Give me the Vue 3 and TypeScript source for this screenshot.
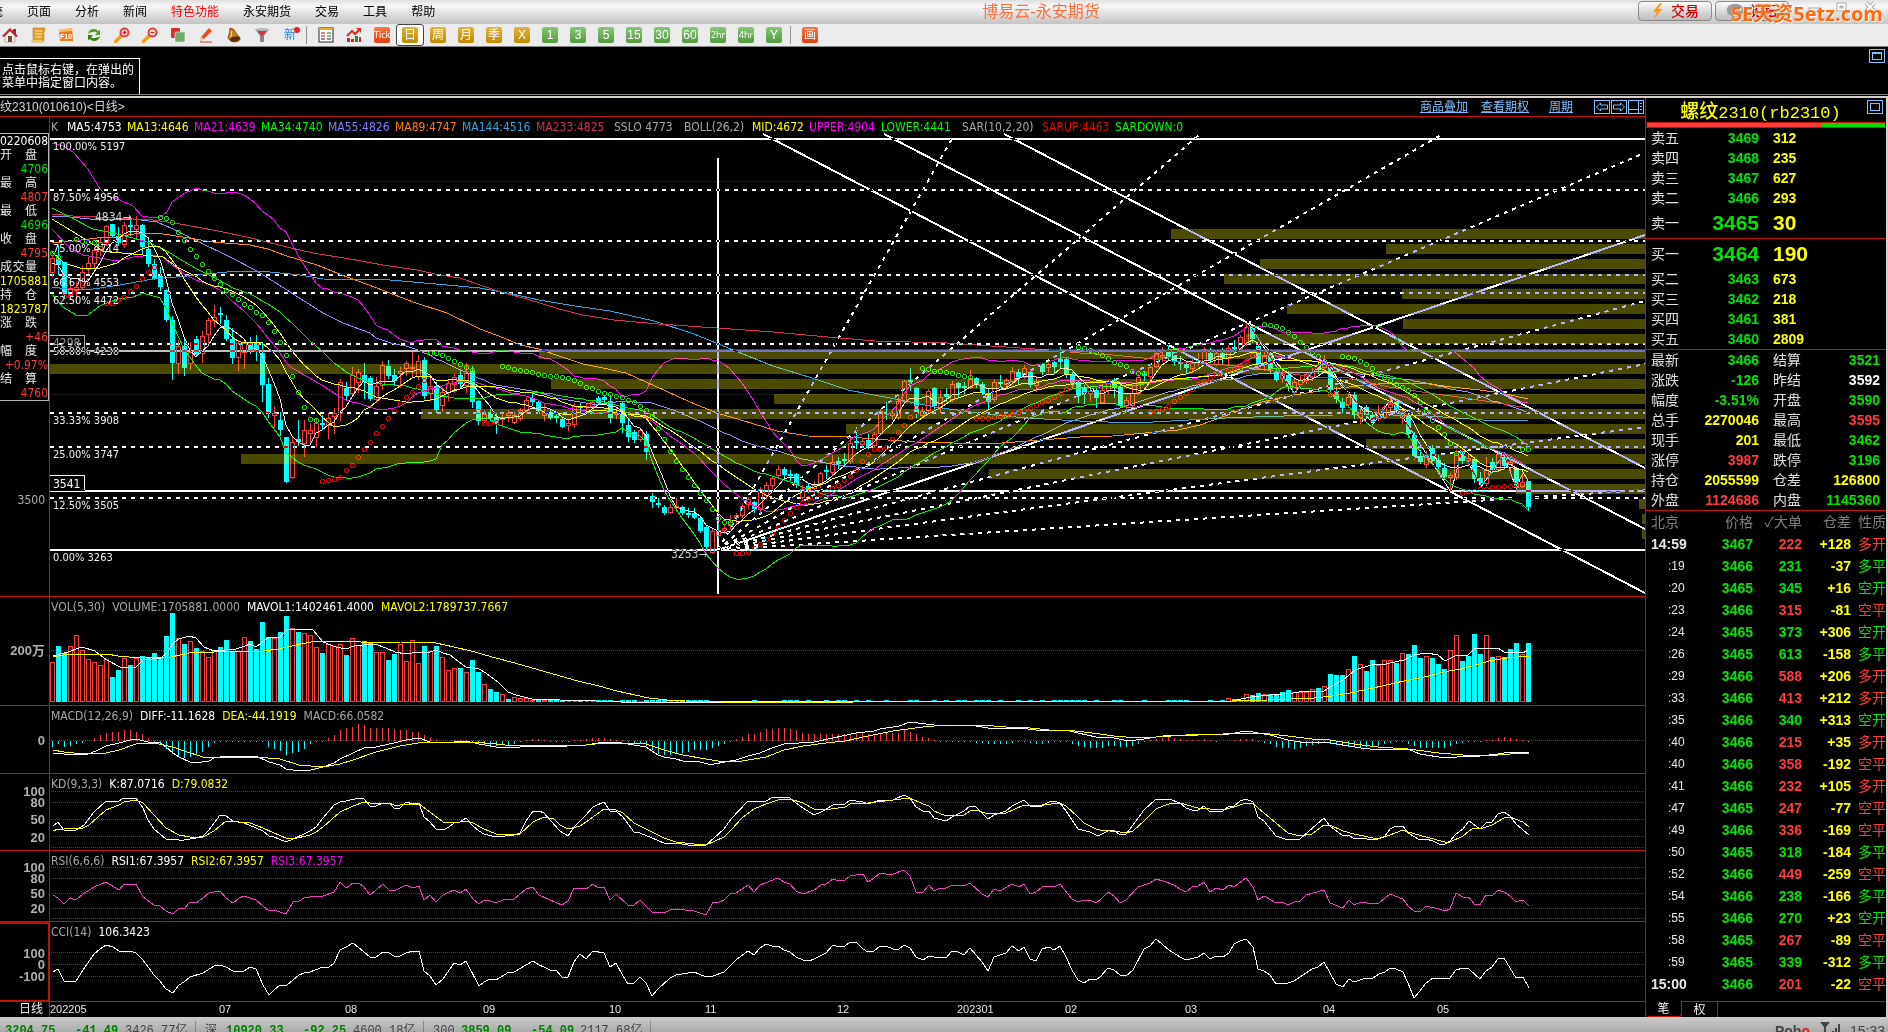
<script setup lang="ts">
interface Tile { x: number; y: number; sx: number; sy: number }
interface Candle { up: boolean; high: number; top: number; bottom: number; low: number }
interface Part { tile: Tile; text: string }

// Sampled series are kept in tiles: each has its own origin and scale.
const A: Tile = { x: 0, y: 130, sx: 3, sy: 3 }
const B: Tile = { x: 480, y: 230, sx: 2.529, sy: 3 }
const C: Tile = { x: 1080, y: 200, sx: 2.751, sy: 3 }
const D: Tile = { x: 0, y: 590, sx: 2.8, sy: 3 }
const E: Tile = { x: 560, y: 590, sx: 2.8, sy: 3 }
const F: Tile = { x: 1100, y: 590, sx: 2.8, sy: 3 }

const STEP = 6
const FIRST = 52
const barX = (i: number): number => FIRST + STEP * i
const tileY = (t: Tile, v: number): number => Math.round(t.y + v / t.sy)
const part = (tile: Tile, text: string): Part => ({ tile, text })

function trace(parts: Part[]): string {
  return parts
    .flatMap(({ tile, text }) =>
      text.trim().split(/\s+/).map((pair) => {
        const [x, y] = pair.split(',').map(Number)
        return `${Math.round(tile.x + x / tile.sx)},${tileY(tile, y)}`
      }),
    )
    .join(' ')
}

function readCandles(tile: Tile, text: string): Candle[] {
  return text.trim().split(/\s*;\s*/).filter(Boolean).map((row) => {
    const [high, top, bottom, low] = row.slice(1).split(' ').map(Number).map((v) => tileY(tile, v))
    return { up: row[0] === 'r', high, top, bottom, low }
  })
}

const candles: Candle[] = [
  ...readCandles(A, `r378 385 425 437;c345 388 405 432;c395 397 492 502;r445 475 495 505;r455 472 480 515;r408 427 470 475;r382 398 418 430;r350 360 398 410;r325 335 358 375;r285 289 337 345;c282 283 317 320;c292 317 338 345;r277 286 343 350;c262 285 290 315;r258 286 298 320;c283 285 352 372;c320 357 401 408;c388 402 446 448;c410 438 470 480;c478 480 570 572;c558 570 698 747;r630 648 698 730;c625 648 713 735;r635 665 698 718;c618 627 675 678;r603 618 670 695;r565 571 613 635;r525 562 570 588;c532 548 553 580;c555 570 627 630;c595 627 685 700;r630 639 680 720;r630 640 665 715;c620 637 662 668;c615 640 665 690;c635 668 765 812;c745 762 850 862;r828 850 856 890;c845 870 900 915;c920 922 1055 1055;r922 935 1042 1045;c870 927 937 945;r870 901 938 978;r880 901 908 935;r868 880 920 948;c855 879 884 893;r850 865 885 923;r835 848 858 908;r747 757 850 870;c755 773 798 807;r710 735 790 793;r717 727 755 785;c698 735 755 805;c738 744 806 810;r740 768 808 815;r693 706 765 778;c690 708 738 745;c718 735 752 762;r710 724 730 772;r693 698 713 735;r665 711 715 738;r675 694 737 747;c682 690 798 805;r738 767 790 810;c755 767 840 845;r770 787 826 843;r750 760 785 810;r733 740 762 785;c718 735 762 770;r700 730 765 785;c708 722 815 830;c810 812 872 882`),
  ...readCandles(B, `r540 552 570 575;c538 545 565 570;c548 562 578 608;r548 562 568 585;r540 550 555 572;r545 555 575 580;r533 541 563 570;r505 511 540 545;c490 505 515 525;c512 517 543 548;r520 545 555 570;c538 545 563 567;c548 558 565 575;c560 567 590 592;r568 580 585 600;r520 528 583 592;c515 527 532 545;r520 528 530 550;r512 517 528 533;c498 505 518 522;c495 500 510 520;c495 512 563 575;r530 545 552 565;c515 518 578 605;c570 585 620 632;c600 605 630 635;r597 600 628 632;c603 612 665 686;c790 798 815 832;c805 820 824 830;c825 830 848 852;r822 832 845 850;r805 828 830 842;c828 830 850 852;c835 848 853 862;c833 850 863 865;c862 865 902 905;c887 890 952 958;r898 902 965 968;r880 900 915 920;r885 895 900 910;r855 875 885 895;r848 855 860 880;r820 828 855 860;r800 808 822 835;c812 816 838 845;r770 778 838 850;r755 765 795 805;r738 745 765 775;r705 717 735 745;c710 717 735 750;c720 733 737 750;c728 732 765 770;r765 778 800 810;c760 768 773 785;r752 765 775 790;r725 730 760 770;c705 720 726 745;r675 695 725 735;c680 693 702 715;c668 686 690 705;r625 640 692 700;c590 632 638 655;r625 632 642 650;c612 630 650 655;r605 612 645 650;r538 543 608 612;c515 546 550 568;r538 550 556 568;r500 512 560 568;r450 454 512 520;c415 450 457 480;c470 475 552 560;r530 543 556 562;r478 484 540 545;c472 475 528 535;r480 500 530 545;c475 492 500 512;r453 462 508 512;c455 458 473 500;c455 468 472 488;r420 445 470 475;c442 444 465 470;c455 462 488 492;c475 490 515 537;r447 457 508 513;c435 455 462 475;r443 450 463 470;r412 422 452 460;c418 425 443 462;r405 413 440 445;c420 425 465 470;r438 452 465 482;c398 403 425 432;r395 402 412 425;c393 397 410 430;c350 387 395 415;c385 388 432 440;c425 433 465 470;c452 457 498 515`),
  ...readCandles(C, `c555 565 580 610;r560 573 578 600;c565 570 595 622;r553 570 605 610;r540 550 570 580;c535 540 563 590;c558 562 618 622;r590 600 615 632;r555 578 615 620;r522 532 578 583;c515 523 525 540;r492 502 527 535;r450 458 497 502;r442 466 472 482;c435 450 470 480;c442 450 483 495;c468 487 493 507;c490 492 505 518;r475 487 503 515;r458 480 488 495;r442 447 485 493;c443 458 480 485;r450 460 492 495;c445 460 473 490;r435 443 473 495;c420 441 446 455;r405 412 445 450;r370 382 430 435;c378 383 417 425;c430 438 492 502;r455 467 490 510;c452 458 508 515;c508 512 540 542;r510 522 535 545;c512 525 560 570;r530 545 575 580;r525 540 552 560;r515 522 540 548;r505 515 530 540;c480 495 510 520;r465 485 500 505;c487 495 570 578;c560 572 598 605;c595 605 625 635;r580 590 613 620;c575 585 645 655;r620 640 650 668;c615 622 645 655;c640 645 665 675;r615 640 655 660;r615 622 650 655;r595 612 622 640;c600 605 630 635;r625 635 650 668;c640 645 703 710;c695 705 767 778;c750 768 785 790;r752 772 793 802;c735 745 782 785;c765 780 800 805;c790 805 830 838;r820 824 832 870;r750 760 832 838;c745 752 783 790;r760 775 780 795;c770 778 838 845;c815 835 848 860;r770 810 850 855;c775 787 810 815;r755 762 808 812;c757 762 797 800;r770 785 800 810;c800 808 865 870;r820 845 858 862;c842 843 922 930`),
]

const closes = candles.map((c) => (c.up ? c.top : c.bottom))

function movingAverage(n: number, shift = 0): string {
  const out: string[] = []
  for (let i = n - 1; i < closes.length; i++) {
    const win = closes.slice(i - n + 1, i + 1)
    const mean = win.reduce((a, b) => a + b, 0) / n
    const dev = Math.sqrt(win.reduce((a, b) => a + (b - mean) ** 2, 0) / n)
    out.push(`${barX(i)},${Math.round(mean - shift * dev)}`)
  }
  return out.join(' ')
}

function withLead(lead: string, rest: string): string {
  return `${trace([part(A, lead)])} ${rest}`
}

const overlays = [
  { color: '#9090ff', points: withLead('157,259 210,262 300,270 400,268 470,275 520,297 590,333 690,380 770,422 870,485 970,550 1030,578 1110,608', movingAverage(55)) },
  { color: '#ff8c00', points: trace([
    part(A, '157,340 220,334 290,325 350,320 420,310 490,311 550,322 640,335 750,345 805,357 860,377 950,405 1040,440 1130,475 1240,515 1340,550 1440,597'),
    part(B, '60,325 100,345 150,358 200,378 260,402 310,413 370,430 420,455 470,483 530,517 600,548 660,570 750,602 830,618 930,622 1000,628 1100,635 1200,640 1320,640 1420,630'),
    part(C, '0,712 90,708 180,700 270,690 330,675 420,640 500,605 560,590 640,575 700,567 780,555 860,548 940,550 1020,560 1100,570 1160,578 1233,598')]) },
  { color: '#2fa4e0', points: trace([
    part(A, '157,470 200,477 280,478 360,465 460,447 560,437 680,425 780,424 900,435 970,448 1170,450 1240,455 1340,465 1440,475'),
    part(B, '80,193 150,210 240,228 330,243 440,272 540,312 640,360 740,408 840,445 930,480 1050,508 1150,530 1260,550 1380,565'),
    part(C, '0,663 150,670 300,660 400,653 560,647 700,645 850,645 960,647 1110,660 1233,661')]) },
  { color: '#d83058', points: trace([
    part(A, '157,253 220,257 290,262 400,267 460,270 540,282 640,300 740,320 860,350 940,368 1050,388 1150,405 1250,420 1320,435 1380,445 1440,466'),
    part(B, '60,188 120,207 200,237 260,256 340,270 450,282 600,295 740,305 880,322 1000,333 1180,340 1330,350 1440,360'),
    part(C, '0,458 90,465 200,478 300,490 400,495 480,505 550,515 640,530 740,535 850,560 960,580 1060,595 1150,610 1233,625')]) },
  { color: '#00f000', points: withLead('157,235 210,260 280,298 340,310 400,325 440,335 500,362 535,385 590,418 650,448 700,475 740,490', movingAverage(34)) },
  { color: '#ff00ff', points: withLead('157,298 210,355 250,375 350,392 400,380 460,376 490,382', movingAverage(21)) },
  { color: '#ffff00', points: withLead('157,268 200,295 250,325 310,363 330,367 400,372 460,378 490,382 530,410 590,440', movingAverage(26)) },
  { color: '#ff00ff', points: withLead('157,38 190,48 220,65 265,118 300,178 320,198 360,210 400,228 427,258 445,262 480,260 500,247 517,215 555,188 590,175', movingAverage(26, 2)) },
  { color: '#00f000', points: withLead('157,492 190,530 229,556 265,556 300,527 350,508 400,500 430,490 480,505 500,540 520,585 553,658 590,710', movingAverage(26, -2)) },
  { color: '#ffff00', points: withLead('157,365 193,398 240,413 300,413 350,398', movingAverage(13)) },
  { color: '#e8e8e8', points: withLead('157,400 175,405 193,435 211,443', movingAverage(5)) },
]

function candlePath(up: boolean): string {
  return candles
    .map((c, i) => {
      if (c.up !== up) return ''
      const x = barX(i) + 0.5
      const wicks = `M${x} ${c.high}V${c.top}M${x} ${c.bottom}V${c.low + 1}`
      const h = Math.max(1, c.bottom - c.top)
      return up ? `${wicks}M${x - 2} ${c.top + 0.5}h4v${h}h-4z` : wicks
    })
    .join('')
}
const redCandles = candlePath(true)
const cyanWicks = candlePath(false)
const cyanBodies = candles
  .map((c, i) => (c.up ? '' : `M${barX(i) - 2} ${c.top}h5v${Math.max(2, c.bottom - c.top)}h-5z`))
  .join('')

function sar(tile: Tile, start: number, up: boolean, text: string) {
  return text.split(' ').map((v, k) => ({ x: barX(start + k) + 0.5, y: tileY(tile, Number(v)) + 0.5, up }))
}
const sarDots = [
  ...sar(A, 0, false, '368 380'),
  ...sar(A, 2, true, '497 498'),
  ...sar(A, 4, false, '328 332 336 336 342'),
  ...sar(A, 9, true, '520 518 510 500 483 467 445 427 412'),
  ...sar(A, 18, false, '262 265 277 307 331 358 379 403 424 443 461 479 493 508 523 532 545 556 577 604 637 676 737 787 832 868 871'),
  ...sar(A, 45, true, '1054 1051 1048 1040 1021 1006 982 958 935 910 889 865 842 820 802 787 769 751'),
  ...sar(A, 63, false, '668 670 676 685 694 703 712 720'),
  ...sar(B, 71, true, '543 580 580 576'),
  ...sar(B, 75, false, '408 412 417 421 424 427 432 435 437 438 441 444 451 460 470 475 482 488 492 498 500 509 517 528 540 558 595 628 664 694 718 742 766 790 810 838 865 876 876'),
  ...sar(B, 114, true, '970 970 966 954 943 928 910 892 870 850 832 818 805 802 793 782 775 765 750 738 720 694 672 657 657 652 626 605 586 560 530'),
  ...sar(B, 145, false, '415 418 422 424 426 430 434 437 440'),
  ...sar(B, 154, true, '565 565 564 560 557 556 552 546 541 534 526 517 510 502 490 477 463'),
  ...sar(B, 171, false, '352'),
  ...sar(C, 172, false, '445 450 457 466 475 485 493 499 512 520 520'),
  ...sar(C, 183, true, '636 634 626 617 602 590 578 567 553 544 535 524 522 513 506 497 483 466 450'),
  ...sar(C, 202, false, '373 376 379 385 397 409 427 442 457 468 482'),
  ...sar(C, 213, true, '583 580'),
  ...sar(C, 215, false, '468 471 474 484 492 505 518 530 541 553 562 570 586 607 634 661 682 703 730 758'),
  ...sar(C, 235, true, '878 874 872 868 867 862 860 858 857 856'),
  ...sar(C, 245, false, '748 748'),
]

// Price distribution bands, top to bottom; each value is the left edge.
const bands = [1171, 1386, 1260, 1224, 1402, 1287, 1403, 1246, 539, 50, 551, 774, 421, 846, 1366, 241, 989, 1516, 1639, 1642, 1642]

const goldenLevels = [
  { label: '100.00% 5197', y: 150 }, { label: '87.50% 4956', y: 201 }, { label: '75.00% 4714', y: 252 },
  { label: '66.67% 4553', y: 286 }, { label: '62.50% 4472', y: 304 }, { label: '50.00% 4230', y: 355 },
  { label: '33.33% 3908', y: 424 }, { label: '25.00% 3747', y: 458 }, { label: '12.50% 3505', y: 509 },
  { label: '0.00% 3263', y: 561 },
]
const dashedLevels = [190, 241, 275, 293, 344, 413, 447, 498]
const solidLevels = [139, 491, 550]
const fanDashed = ['953,137', '1200,134', '1441,135', '1642,154', '1645,301', '1645,364', '1645,427', '1645,490']
const channels = [[763, 134, 1645, 593], [884, 134, 1645, 529], [1004, 134, 1645, 468]]
const zigzag = trace([part(C, '462,370 590,580 672,480 805,672 855,597 1020,875 1052,750 1103,860 1167,762 1200,865 1217,825')])

const volText = 'r217 c168 c190 r169 r136 r181 r208 r217 r226 r208 c262 c240 r205 c225 r205 c198 c203 c189 c200 c138 c69 r145 c162 r154 c174 r184 r202 r184 c171 c150 c183 r184 r142 c153 c177 c96 c142 r145 c126 c78 r115 c126 r130 r136 r172 c189 r163 r168 r163 c195 r145 r165 c153 c159 r187 r187 c210 c192 r163 r214 r151 r220 c168 r184 c168 r202 r241 r235 c234 r247 c210 c246 r283 c297 c306 r313 c327 r322 r325 r325 r330 c330 r330'
const volTail = 'r325 c327 r330 r313 c316 c310 r313 c313 c313 c307 c300 r307 r307 r307 r298 c294 r289 c252 c255 c255 r238 c198 r223 c243 c210 r226 r211 r211 c220 r190 c192 c165 c204 r199 c204 c222 c237 r181 r136 c213 c198 c132 c192 r136 c201 r199 c201 c177 c159 r193 c159'
const volumes = [
  ...volText.split(' '),
  ...Array.from({ length: 113 }, (_, k) => (candles[83 + k].up ? 'r333' : 'c331')),
  ...volTail.split(' '),
].map((v, i) => ({ up: v[0] === 'r', x: barX(i), y: tileY(D, Number(v.slice(1))) }))
const volRed = volumes.filter((v) => v.up).map((v) => `M${v.x - 1.5} ${v.y + 0.5}h4V701.5h-4z`).join('')
const volCyan = volumes.filter((v) => !v.up).map((v) => `M${v.x - 2} ${v.y}h5V702h-5z`).join('')

const volFast = trace([
  part(D, '147,198 190,185 230,170 265,183 300,210 335,230 382,230 400,210 450,203 470,185 485,160 500,148 530,137 550,145 570,170 600,182 660,178 685,168 700,163 718,170 752,142 785,140 803,120 860,116 875,120 903,155 940,172 970,176 990,168 1050,163 1080,175 1105,185 1138,193 1170,187 1205,186 1222,180 1240,190 1260,195 1305,232 1340,236 1360,248 1395,275 1422,307 1445,314 1490,327'),
  part(E, '0,330 100,332 170,336 450,336 820,334 1500,334'),
  part(F, '0,334 120,332 270,332 370,333 410,325 445,318 540,310 575,304 628,302 645,290 680,270 713,240 760,226 800,222 850,210 880,196 915,190 945,196 965,214 1000,196 1030,194 1050,173 1115,173 1132,187 1183,188 1200,178')])
const volSlow = trace([
  part(D, '147,200 180,195 210,193 250,192 300,193 330,198 360,200 480,200 530,190 600,187 680,184 740,184 780,177 830,165 870,157 940,153 1010,157 1120,157 1220,160 1270,170 1320,183 1390,203 1430,215 1500,237'),
  part(E, '0,258 50,272 110,288 160,304 210,316 250,324 300,330 350,333 450,336 820,336 1500,334'),
  part(F, '0,334 370,333 470,329 600,323 650,317 700,308 740,300 790,288 850,273 920,258 960,247 1010,236 1060,222 1090,212 1140,203 1200,197')])

const macdBars = '-17 -10 -17 -14 -10 -5 0 10 17 25 28 28 32 32 28 20 10 -3 -12 -25 -40 -48 -52 -48 -42 -32 -17 -7 -2 -2 -2 -2 -2 -2 -2 -4 -17 -23 -30 -43 -37 -32 -23 -10 -3 -2 10 17 32 40 43 50 47 40 38 40 38 35 32 32 28 28 17 10 3 0 0 4 4 4 -3 -10 -13 -15 -15 -12 -12 -10 -4 2 5 5 2 -2 -2 -2 -2 2 4 7 10 10 10 7 4 2 -3 -8 -8 -14 -28 -38 -43 -43 -38 -35 -32 -27 -26 -26 -20 -14 -8 -2 7 13 22 22 28 35 37 40 40 37 34 25 22 20 20 20 22 22 22 22 25 25 22 22 25 27 25 25 32 28 20 11 10 3 -1 -1 -1 -1 -1 -2 -5 -5 -10 -8 -8 -8 -5 -2 -2 -5 -8 -8 -5 -2 -2 -4 -8 -14 -17 -20 -20 -20 -15 -14 -17 -17 -14 -8 -2 3 7 10 11 10 7 4 4 4 7 3 -1 0 0 2 5 7 6 -2 -5 -8 -17 -20 -22 -23 -20 -16 -12 -8 -5 -10 -13 -16 -18 -18 -17 -17 -18 -16 -10 -5 -3 -2 -8 -14 -20 -20 -20 -20 -20 -16 -8 -5 -2 -2 -2 2 2 10 13 10 6 3 -2'
  .split(' ').map(Number)
const macdPath = (up: boolean): string =>
  macdBars.map((v, i) => (v !== 0 && v > 0 === up ? `M${barX(i) + 0.5} 740.5v${-Math.round(v / 3) || 1}` : '')).join('')

const diffLine = trace([
  part(D, '147,490 180,491 214,496 247,491 270,482 298,468 332,460 365,451 382,448 415,455 449,460 466,472 483,490 500,500 533,515 550,518 584,513 600,505 634,499 660,502 718,499 752,516 785,526 802,538 819,541 860,542 903,531 936,520 953,506 987,490 1020,475 1054,470 1088,461 1104,460 1138,449 1172,445 1205,455 1239,458 1306,454 1340,463 1390,472 1457,472 1491,467'),
  part(E, '0,470 40,464 74,464 124,455 158,457 208,466 241,470 275,494 292,502 326,508 343,514 393,517 415,523 430,523 494,510 527,497 561,488 594,475 628,461 712,455 763,445 830,429 880,424 897,418 948,409 981,397 1048,405 1166,407 1199,415 1250,418 1284,415 1334,421 1418,421 1451,430 1502,442'),
  part(F, '0,442 40,445 80,452 124,446 192,434 275,434 343,432 360,431 410,424 427,425 443,430 477,436 527,450 561,457 594,457 628,455 680,466 730,475 779,481 863,478 897,491 965,503 1032,497 1065,499 1115,491 1149,485 1200,490')])
const deaLine = trace([
  part(D, '147,481 180,486 231,491 298,488 332,479 382,463 432,460 483,470 516,484 567,500 651,502 718,502 785,508 836,526 903,532 953,523 987,511 1054,487 1121,468 1188,457 1239,457 1323,455 1390,463 1440,468 1491,466'),
  part(E, '0,466 74,464 124,460 175,460 241,463 292,479 343,494 410,508 460,515 510,512 577,500 628,481 680,469 745,460 797,452 863,439 931,422 1015,410 1082,406 1182,406 1250,412 1317,415 1368,419 1418,419 1468,425'),
  part(F, '0,433 40,437 107,445 158,442 241,436 343,433 410,430 477,431 527,439 594,448 645,451 712,461 779,472 863,476 948,488 1015,494 1082,497 1149,493 1200,490')])

const kLine = trace([
  part(D, '147,707 163,697 180,720 214,720 235,705 264,665 298,634 332,633 348,625 382,625 399,655 415,690 432,718 449,733 466,748 500,750 516,751 550,743 567,737 584,720 617,674 634,677 651,694 684,700 718,715 735,724 752,738 768,741 802,757 819,748 852,733 869,723 886,710 903,685 920,662 936,645 953,635 970,634 1004,625 1020,628 1037,648 1054,648 1071,638 1088,640 1104,655 1121,653 1138,637 1155,643 1172,640 1188,680 1205,695 1222,717 1239,721 1256,712 1272,700 1289,697 1306,685 1323,708 1340,724 1356,733 1390,742 1440,736 1457,730 1474,692 1491,664 1508,664 1524,670 1541,690'),
  part(E, '0,724 23,737 40,710 74,675 92,652 124,637 140,663 158,664 175,682 208,727 225,728 258,745 292,760 326,760 376,769 410,766 430,745 460,718 480,688 527,634 544,637 560,632 577,632 595,622 611,620 645,625 662,638 680,655 712,676 730,667 763,646 797,641 813,629 830,634 847,636 863,643 897,629 931,630 964,616 981,625 998,650 1015,664 1032,664 1048,684 1082,694 1098,682 1132,664 1149,649 1166,652 1199,688 1216,676 1250,664 1266,647 1300,631 1317,648 1334,650 1350,648 1368,636 1384,634 1401,640 1418,662 1451,718 1485,727 1502,736'),
  part(F, '0,735 23,724 40,721 57,736 74,731 92,705 124,660 158,628 192,628 225,638 241,655 258,661 275,661 292,649 309,667 326,662 343,664 360,647 376,647 393,634 410,628 427,637 443,682 460,694 494,737 527,751 561,748 628,683 645,707 680,739 696,736 712,746 730,743 763,751 779,748 797,737 813,716 830,709 847,709 863,730 897,751 914,748 931,752 948,761 965,763 981,753 998,731 1015,716 1032,694 1065,718 1082,700 1098,697 1115,673 1132,667 1149,678 1166,703 1200,735')])
const dLine = trace([
  part(D, '147,722 163,716 180,718 231,715 250,705 298,660 332,644 348,637 382,631 399,638 432,675 466,713 500,735 533,742 567,741 600,724 634,693 700,700 735,713 768,728 802,744 819,746 869,736 886,727 903,710 953,665 987,647 1020,637 1054,642 1088,640 1104,644 1121,645 1138,642 1172,642 1205,665 1239,697 1272,699 1306,694 1323,698 1356,717 1390,731 1420,734 1457,732 1491,695 1524,682 1550,687'),
  part(E, '0,704 23,716 57,708 74,697 124,658 158,661 175,668 208,698 258,727 292,745 326,755 376,762 410,766 460,740 480,720 510,685 544,658 577,643 611,631 645,628 680,640 712,658 740,660 797,652 813,641 863,640 931,631 981,625 1015,643 1032,649 1048,662 1082,679 1132,676 1149,664 1166,661 1199,673 1250,670 1300,646 1350,646 1401,640 1418,648 1451,682 1468,698 1502,716'),
  part(F, '0,719 57,725 74,728 92,722 124,692 158,658 175,649 192,643 225,640 275,655 309,658 343,661 376,652 410,640 427,640 443,655 460,668 494,700 527,728 561,739 594,731 628,706 645,706 680,722 712,733 779,746 813,734 847,721 863,725 914,740 965,755 981,755 1015,737 1032,722 1048,715 1065,717 1098,706 1132,685 1149,682 1183,697 1200,710')])
const rsiLine = trace([
  part(D, '147,915 163,923 180,943 197,925 214,931 231,913 264,892 298,877 332,899 348,883 365,886 382,883 399,920 432,946 449,949 466,963 483,972 500,953 516,957 533,935 550,940 567,923 584,910 617,904 634,924 651,938 668,923 684,919 718,931 735,949 752,962 768,961 802,972 819,935 836,934 852,925 886,918 903,919 936,905 953,877 970,895 987,880 1004,880 1020,892 1037,914 1071,883 1088,899 1104,904 1138,886 1155,893 1172,889 1188,931 1205,916 1222,937 1239,915 1256,907 1272,901 1289,910 1306,897 1323,926 1340,941 1356,931 1373,933 1390,940 1407,929 1424,926 1440,928 1457,912 1474,896 1491,892 1508,916 1541,931'),
  part(E, '6,944 23,934 40,895 74,898 92,883 107,894 124,890 141,930 158,911 191,946 208,946 225,929 258,967 292,970 309,961 326,958 376,964 410,976 427,937 444,937 460,931 477,913 494,908 527,886 544,907 561,884 611,865 628,877 645,881 662,904 680,913 712,901 730,884 745,883 763,868 780,874 797,869 813,857 830,856 847,853 863,875 880,864 897,849 914,853 931,853 964,841 981,858 998,907 1015,905 1032,884 1048,904 1065,895 1082,895 1098,884 1132,889 1149,878 1182,911 1199,922 1216,896 1233,902 1266,883 1284,892 1300,883 1317,913 1334,907 1350,892 1368,887 1384,892 1401,883 1434,926 1451,937 1468,931 1485,931 1502,940'),
  part(F, '0,930 23,907 40,917 57,940 74,931 107,890 140,878 158,866 175,874 208,884 225,898 241,907 258,892 275,887 292,875 309,907 326,895 343,901 360,886 376,892 410,865 427,890 443,931 460,919 494,940 510,937 527,946 544,935 561,934 578,914 628,899 645,938 680,955 696,931 712,946 730,935 763,943 780,938 813,913 847,926 863,949 880,964 897,967 914,949 948,958 965,964 981,956 998,910 1015,922 1032,922 1048,943 1065,945 1082,915 1098,917 1115,899 1132,907 1149,919 1166,937 1183,929 1200,949')])
const cciLine = trace([
  part(D, '147,1145 163,1138 180,1174 214,1174 231,1140 264,1093 281,1077 298,1066 315,1071 332,1084 365,1084 382,1090 399,1110 432,1155 449,1172 466,1197 483,1210 500,1184 516,1175 533,1160 567,1148 600,1127 617,1124 634,1130 651,1144 684,1142 701,1132 718,1138 735,1185 752,1214 768,1200 785,1184 802,1189 819,1169 836,1154 852,1148 869,1145 903,1132 920,1130 936,1120 953,1079 970,1072 987,1060 1020,1086 1037,1102 1054,1102 1071,1087 1088,1090 1104,1099 1121,1099 1138,1088 1155,1084 1172,1084 1188,1142 1205,1157 1222,1186 1239,1167 1272,1120 1289,1126 1306,1114 1340,1189 1356,1177 1373,1168 1390,1171 1424,1147 1440,1147 1491,1114 1508,1126 1524,1130 1541,1141 1558,1141'),
  part(E, '6,1162 23,1162 40,1115 57,1093 74,1108 92,1084 124,1089 141,1132 158,1118 175,1158 191,1183 208,1178 225,1162 241,1180 258,1218 275,1196 309,1165 326,1156 376,1147 410,1162 427,1159 460,1147 494,1110 527,1084 544,1096 561,1075 577,1063 594,1068 611,1069 628,1081 645,1087 662,1102 680,1111 696,1113 712,1108 745,1090 763,1066 780,1072 797,1069 813,1057 830,1057 847,1077 863,1087 880,1084 897,1069 914,1069 931,1078 948,1076 964,1066 981,1075 998,1101 1015,1111 1032,1097 1048,1102 1082,1105 1098,1084 1115,1087 1132,1096 1149,1075 1182,1115 1199,1143 1216,1100 1250,1088 1266,1069 1284,1084 1300,1072 1317,1107 1334,1114 1350,1078 1368,1072 1384,1081 1401,1067 1418,1100 1434,1140 1451,1170 1468,1180 1485,1168 1502,1171'),
  part(F, '0,1162 23,1135 40,1141 57,1156 74,1159 92,1140 124,1077 140,1068 158,1048 192,1079 225,1102 241,1111 275,1101 292,1090 309,1108 326,1099 343,1102 360,1090 376,1061 393,1054 410,1046 427,1070 443,1138 460,1144 477,1156 494,1183 527,1180 544,1172 594,1136 611,1132 628,1117 645,1150 662,1183 680,1192 696,1168 712,1177 745,1165 763,1165 780,1153 797,1147 813,1135 830,1138 847,1147 863,1180 880,1225 897,1203 914,1180 931,1165 981,1165 998,1141 1015,1135 1032,1138 1065,1168 1082,1142 1098,1132 1115,1107 1132,1105 1149,1133 1166,1165 1183,1162 1200,1193')])

interface Line { color: string; points: string }
interface SubPanel {
  id: string; top: number; height: number; grid: number[]
  ticks: { t: string; y: number }[]
  legend: { t: string; c: string }[]
  lines: Line[]
}
const panels: SubPanel[] = [
  { id: 'vol', top: 597, height: 108, grid: [650], ticks: [{ t: '200万', y: 655 }],
    legend: [{ t: 'VOL(5,30)', c: 'gray' }, { t: 'VOLUME:1705881.0000', c: 'gray' }, { t: 'MAVOL1:1402461.4000', c: 'white' }, { t: 'MAVOL2:1789737.7667', c: 'yellow' }],
    lines: [{ color: '#fff', points: volFast }, { color: '#ff0', points: volSlow }] },
  { id: 'macd', top: 706, height: 67, grid: [740], ticks: [{ t: '0', y: 745 }],
    legend: [{ t: 'MACD(12,26,9)', c: 'gray' }, { t: 'DIFF:-11.1628', c: 'white' }, { t: 'DEA:-44.1919', c: 'yellow' }, { t: 'MACD:66.0582', c: 'gray' }],
    lines: [{ color: '#fff', points: diffLine }, { color: '#ff0', points: deaLine }] },
  { id: 'kd', top: 774, height: 76, grid: [791, 802, 819, 836, 847],
    ticks: [{ t: '100', y: 796 }, { t: '80', y: 807 }, { t: '50', y: 824 }, { t: '20', y: 842 }],
    legend: [{ t: 'KD(9,3,3)', c: 'gray' }, { t: 'K:87.0716', c: 'white' }, { t: 'D:79.0832', c: 'yellow' }],
    lines: [{ color: '#fff', points: kLine }, { color: '#ff0', points: dLine }] },
  { id: 'rsi', top: 851, height: 70, grid: [867, 878, 893, 908, 918],
    ticks: [{ t: '100', y: 872 }, { t: '80', y: 883 }, { t: '50', y: 898 }, { t: '20', y: 913 }],
    legend: [{ t: 'RSI(6,6,6)', c: 'gray' }, { t: 'RSI1:67.3957', c: 'white' }, { t: 'RSI2:67.3957', c: 'yellow' }, { t: 'RSI3:67.3957', c: 'magenta' }],
    lines: [{ color: '#f040c0', points: rsiLine }] },
  { id: 'cci', top: 922, height: 79, grid: [952, 964, 976],
    ticks: [{ t: '100', y: 957 }, { t: '0', y: 969 }, { t: '-100', y: 981 }],
    legend: [{ t: 'CCI(14)', c: 'gray' }, { t: '106.3423', c: 'white' }],
    lines: [{ color: '#fff', points: cciLine }] },
]

const mainLegend = [
  { t: 'MA5:4753', c: 'white', w: 60 }, { t: 'MA13:4646', c: 'yellow', w: 67 }, { t: 'MA21:4639', c: 'magenta', w: 67 },
  { t: 'MA34:4740', c: 'green', w: 67 }, { t: 'MA55:4826', c: 'blue', w: 67 }, { t: 'MA89:4747', c: 'orange', w: 67 },
  { t: 'MA144:4516', c: 'sky', w: 74 }, { t: 'MA233:4825', c: 'crimson', w: 78 }, { t: 'SSLO 4773', c: 'gray', w: 70 },
  { t: 'BOLL(26,2)', c: 'gray', w: 68 }, { t: 'MID:4672', c: 'yellow', w: 57 }, { t: 'UPPER:4904', c: 'magenta', w: 72 },
  { t: 'LOWER:4441', c: 'green', w: 81 }, { t: 'SAR(10,2,20)', c: 'gray', w: 80 }, { t: 'SARUP:4463', c: 'red', w: 73 },
  { t: 'SARDOWN:0', c: 'green', w: 80 },
]
const info = [
  { k: ['开', '盘'], v: '4706', c: 'down' }, { k: ['最', '高'], v: '4807', c: 'up' }, { k: ['最', '低'], v: '4696', c: 'down' },
  { k: ['收', '盘'], v: '4795', c: 'up' }, { k: ['成', '交', '量'], v: '1705881', c: 'yellow' }, { k: ['持', '仓'], v: '1823787', c: 'yellow' },
  { k: ['涨', '跌'], v: '+46', c: 'up' }, { k: ['幅', '度'], v: '+0.97%', c: 'up' }, { k: ['结', '算'], v: '4760', c: 'up' },
]
const months = [
  { t: '202205', x: 50 }, { t: '07', x: 219 }, { t: '08', x: 345 }, { t: '09', x: 483 }, { t: '10', x: 609 }, { t: '11', x: 705 },
  { t: '12', x: 837 }, { t: '202301', x: 957 }, { t: '02', x: 1065 }, { t: '03', x: 1185 }, { t: '04', x: 1323 }, { t: '05', x: 1437 },
]

const menus = ['系统', '页面', '分析', '新闻', '特色功能', '永安期货', '交易', '工具', '帮助']
const periods = [
  { t: '日', k: 'gold', on: true }, { t: '周', k: 'gold' }, { t: '月', k: 'gold' }, { t: '季', k: 'gold' }, { t: 'X', k: 'gold' },
  { t: '1', k: 'leaf' }, { t: '3', k: 'leaf' }, { t: '5', k: 'leaf' }, { t: '15', k: 'leaf' }, { t: '30', k: 'leaf' }, { t: '60', k: 'leaf' },
  { t: '2hr', k: 'leaf small' }, { t: '4hr', k: 'leaf small' }, { t: 'Y', k: 'leaf' },
]

const ratio = 73.5
const asks = [['卖五', '3469', '312'], ['卖四', '3468', '235'], ['卖三', '3467', '627'], ['卖二', '3466', '293'], ['卖一', '3465', '30']]
const bids = [['买一', '3464', '190'], ['买二', '3463', '673'], ['买三', '3462', '218'], ['买四', '3461', '381'], ['买五', '3460', '2809']]
const stats = [
  ['最新', '3466', 'down', '结算', '3521', 'down'], ['涨跌', '-126', 'down', '昨结', '3592', 'white'],
  ['幅度', '-3.51%', 'down', '开盘', '3590', 'down'], ['总手', '2270046', 'yellow', '最高', '3595', 'up'],
  ['现手', '201', 'yellow', '最低', '3462', 'down'], ['涨停', '3987', 'up', '跌停', '3196', 'down'],
  ['持仓', '2055599', 'yellow', '仓差', '126800', 'yellow'], ['外盘', '1124686', 'up', '内盘', '1145360', 'down'],
]
const trades = `14:59 3467 222 +128 多开 u
:19 3466 231 -37 多平 d
:20 3465 345 +16 空开 d
:23 3466 315 -81 空平 u
:24 3465 373 +306 空开 d
:26 3465 613 -158 多平 d
:29 3466 588 +206 多开 u
:33 3466 413 +212 多开 u
:35 3466 340 +313 空开 d
:40 3466 215 +35 多开 u
:40 3466 358 -192 空平 u
:41 3466 232 +105 多开 u
:47 3465 247 -77 空平 u
:49 3466 336 -169 空平 u
:50 3465 318 -184 多平 d
:52 3466 449 -259 空平 u
:54 3466 238 -166 多平 d
:55 3466 270 +23 空开 d
:58 3465 267 -89 空平 u
:59 3465 339 -312 多平 d
15:00 3466 201 -22 空平 u`.split('\n').map((l) => l.split(' '))
</script>

<template>
  <div class="app">
    <header class="titlebar">
      <nav class="menus">
        <a v-for="m in menus" :key="m" href="#" :class="{ hot: m === '特色功能' }">{{ m }}</a>
      </nav>
      <h1>博易云-永安期货</h1>
      <div class="actions">
        <button type="button" class="action">
          <svg width="14" height="16" viewBox="0 0 14 16"><path d="M9 0L2 9h4L3 16l8-10H7l4-6z" fill="#f90" /></svg>交易
        </button>
        <button type="button" class="action">
          <svg width="18" height="16" viewBox="0 0 18 16"><path d="M9 1c-5 0-8 2-8 6s2 5 5 6l-1 3 5-3c5 0 7-2 7-6s-3-6-8-6z" fill="#999" /></svg>论坛
        </button>
        <div class="winbtns">
          <button type="button" aria-label="最小化"><svg width="12" height="12" viewBox="0 0 12 12"><rect x="1" y="7" width="9" height="3" fill="#fff" stroke="#aaa" /></svg></button>
          <button type="button" aria-label="最大化"><svg width="12" height="12" viewBox="0 0 12 12"><rect x="1" y="2" width="9" height="8" fill="#fff" stroke="#aaa" /><rect x="4" y="5" width="3" height="2" fill="#ccc" stroke="#aaa" /></svg></button>
          <button type="button" aria-label="关闭"><svg width="12" height="12" viewBox="0 0 12 12"><path d="M2 2l8 8M10 2l-8 8" stroke="#aaa" stroke-width="4" /><path d="M2 2l8 8M10 2l-8 8" stroke="#fff" stroke-width="2" /></svg></button>
        </div>
        <span class="stamp">5E天资5etz.com</span>
      </div>
    </header>

    <div class="toolbar">
      <button type="button" class="tool" aria-label="首页"><svg viewBox="0 0 16 16"><path d="M3 8v7h10V8L8 4z" fill="#f4f4f0" stroke="#999" stroke-width=".7" /><path d="M11 2h3v5h-3z" fill="#a22" /><path d="M0 9l8-8 8 8-2 1-6-6-6 6z" fill="#c8202c" /><path d="M6 9h4v6H6z" fill="#7a4a2a" /></svg></button>
      <button type="button" class="tool" aria-label="文档"><svg viewBox="0 0 16 16"><path d="M3 1h12q-2 6-1 11l-1 3H2q2-3 1-7z" fill="#e0a030" stroke="#b87810" stroke-width=".6" /><path d="M5 4h7M5 7h7M5 10h7" stroke="#ffe8a8" /><path d="M1 13h11l1 2H2z" fill="#f4c860" /></svg></button>
      <button type="button" class="tool" aria-label="F10"><svg viewBox="0 0 16 16"><path d="M1 3l13-2 1 13H2z" fill="#f07820" /><path d="M1 3l13-2v3L1 5z" fill="#ffc060" /><text x="8" y="12" text-anchor="middle" font-size="7" font-weight="700" fill="#fff">F10</text></svg></button>
      <button type="button" class="tool" aria-label="刷新"><svg viewBox="0 0 16 16"><path d="M2 7q1-5 6-5 3 0 4 2l2-1v5H9l2-2Q9 4 7 5 4 5 2 7z" fill="#5a9a28" /><path d="M14 9q-1 5-6 5-3 0-4-2l-2 1V8h5l-2 2q2 2 4 1 3 0 5-2z" fill="#3c7c18" /></svg></button>
      <button v-for="z in ['放大', '缩小']" :key="z" type="button" class="tool" :aria-label="z"><svg viewBox="0 0 16 16"><path d="M1 15l6-6" stroke="#f0a020" stroke-width="3.5" stroke-linecap="round" /><circle cx="10.5" cy="5.5" r="4" fill="#ffeaea" stroke="#e04040" stroke-width="2" /><path d="M8.500 5.500h4" stroke="#e02020" stroke-width="1.500" /><path v-if="z === '放大'" d="M10.500 3.500v4" stroke="#e02020" stroke-width="1.500" /></svg></button>
      <button type="button" class="tool" aria-label="叠加"><svg viewBox="0 0 16 16"><rect x="1" y="1" width="9" height="10" rx="1" fill="#d83030" /><rect x="5" y="5" width="10" height="10" rx="1" fill="#70a868" stroke="#e8f0e8" stroke-width=".6" /></svg></button>
      <button type="button" class="tool" aria-label="画线"><svg viewBox="0 0 16 16"><path d="M3 10L11 1l3 3-8 8-4 2z" fill="#e85020" /><path d="M3 10l3 2-4 2z" fill="#f8d8a0" /><path d="M2 15h12" stroke="#e07060" stroke-width="1.500" /></svg></button>
      <button type="button" class="tool" aria-label="预警"><svg viewBox="0 0 16 16"><path d="M4 1q4 0 6 5l4 5q1 3-5 4-7-1-7-5Q4 6 4 1z" fill="#c88018" stroke="#7a4008" stroke-width=".8" /><ellipse cx="9" cy="12" rx="5" ry="2.500" fill="#602c08" transform="rotate(-12 9 12)" /><path d="M5 4q1 3 0 6" stroke="#ffe080" fill="none" /></svg></button>
      <button type="button" class="tool" aria-label="筛选"><svg viewBox="0 0 16 16"><path d="M1 2h14l-5 7v6H6V9z" fill="#888" /><path d="M4 4h8L8 9z" fill="#e82830" /><ellipse cx="8" cy="2.500" rx="7" ry="1.500" fill="#b8b8b8" /></svg></button>
      <button type="button" class="tool fresh">新<i></i></button>
      <span class="bar"></span>
      <button type="button" class="tool" aria-label="报价"><svg viewBox="0 0 16 16"><rect x="1" y="1" width="14" height="14" fill="#fff" stroke="#222" /><path d="M1 2h14" stroke="#f0a820" stroke-width="2" /><path d="M3 6h4M3 9h4" stroke="#d00" /><path d="M9 6h4M9 9h4" stroke="#080" /><path d="M3 12h4M9 12h4" stroke="#222" /></svg></button>
      <button type="button" class="tool" aria-label="走势"><svg viewBox="0 0 16 16"><path d="M1 15v-4h3v4zM5 15v-3h3v3z" fill="#d82020" /><path d="M9 15V9h3v6z" fill="#388030" /><path d="M13 15v-5h2v5z" fill="#d82020" /><path d="M1 9l5-5 3 3 5-5" fill="none" stroke="#e02828" stroke-width="2" /><path d="M10 1h5v5z" fill="#e02828" /></svg></button>
      <button type="button" class="tool"><span class="chip fire small">Tick</span></button>
      <button v-for="p in periods" :key="p.t" type="button" class="tool" :class="{ on: p.on }"><span class="chip" :class="p.k">{{ p.t }}</span></button>
      <span class="bar"></span>
      <button type="button" class="tool"><span class="chip fire">画</span></button>
    </div>

    <section class="notice">
      <p>点击鼠标右键，在弹出的<br />菜单中指定窗口内容。</p>
      <button type="button" class="winicon" aria-label="窗口"><svg width="16" height="14" viewBox="0 0 16 14"><rect x=".5" y=".5" width="15" height="13" /><rect x="3.500" y="3.500" width="9" height="7" /><path d="M3 4.500h10" /></svg></button>
    </section>

    <main class="work">
      <section class="charts">
        <div class="charthead">
          <span class="symbol">螺纹2310(010610)&lt;日线&gt;</span>
          <a href="#">商品叠加</a><a href="#">查看期权</a><a href="#" class="cycle">周期</a>
          <span class="icons">
            <button type="button" aria-label="前移"><svg width="16" height="14" viewBox="0 0 16 14"><rect x=".5" y=".5" width="15" height="13" /><path d="M2.500 7l4-4v2h7v4h-7v2z" /></svg></button>
            <button type="button" aria-label="后移"><svg width="16" height="14" viewBox="0 0 16 14"><rect x=".5" y=".5" width="15" height="13" /><path d="M13.500 7l-4-4v2h-7v4h7v2z" /></svg></button>
            <button type="button" aria-label="分栏"><svg width="16" height="14" viewBox="0 0 16 14"><rect x=".5" y=".5" width="15" height="13" /><path d="M0 9.500h11M10.500 0v13M12 3.500h2M12 6.500h2M12 9.500h2" /></svg></button>
          </span>
        </div>

        <div class="row main">
          <div class="side">
            <svg class="axis" viewBox="0 117 49 479" preserveAspectRatio="none"><text x="45" y="504" text-anchor="end" class="plain">3500</text></svg>
            <dl class="info">
              <div class="date">20220608</div>
              <template v-for="r in info" :key="r.v">
                <dt><span v-for="ch in r.k" :key="ch">{{ ch }}</span></dt>
                <dd :class="r.c">{{ r.v }}</dd>
              </template>
            </dl>
          </div>
          <div class="plot">
            <div class="legend"><span class="gray k">K</span><span v-for="l in mainLegend" :key="l.t" :class="l.c" :style="{ width: l.w + 'px' }">{{ l.t }}</span></div>
            <svg viewBox="50 117 1595 479" preserveAspectRatio="none" shape-rendering="crispEdges">
              <rect x="50" y="117" width="1595" height="479" fill="#000" />
              <path d="M51 181.500H1645M51 288.500H1645M51 394.500H1645M51 500.500H1645" stroke="#900000" stroke-dasharray="1 1" />
              <path :d="redCandles" fill="#000" stroke="#ff3c3c" />
              <path :d="cyanWicks" stroke="#0ff" />
              <path :d="cyanBodies" fill="#0ff" />
              <polyline v-for="(o, i) in overlays" :key="i" :points="o.points" fill="none" :stroke="o.color" />
              <circle v-for="(s, i) in sarDots" :key="'s' + i" :cx="s.x" :cy="s.y" r="2" fill="none" :stroke="s.up ? '#f00000' : '#00f000'" />
              <rect v-for="(x, i) in bands" :key="'b' + i" :x="x" :y="229 + 15 * i" :width="1645 - x" height="10" fill="#ff0" fill-opacity=".29" />
              <g class="labels">
                <text v-for="g in goldenLevels" :key="g.label" x="53" :y="g.y">{{ g.label }}</text>
                <text x="95" y="221" class="mark">4834→</text>
                <text x="671" y="558" class="mark">3253→</text>
                <path d="M50 335.500H84.500V351" stroke="#aaa" fill="none" />
                <text x="53" y="347" class="mark dim">4298</text>
                <rect x="49.500" y="475.500" width="35" height="15" fill="#000" stroke="#fff" />
                <text x="53" y="488" class="mark lit">3541</text>
              </g>
              <g class="xor" stroke="#fff" fill="none">
                <path d="M50 351H1645" stroke="#c0c0c0" stroke-width="2" />
                <path v-for="y in solidLevels" :key="'h' + y" :d="`M50 ${y}H1645`" stroke-width="2" />
                <path v-for="y in dashedLevels" :key="'d' + y" :d="`M50 ${y}H1645`" stroke-width="2" stroke-dasharray="4 5" />
                <path d="M718 158V594" stroke-width="2" />
                <path d="M718 550L1645 235" stroke-width="2" />
                <path v-for="p in fanDashed" :key="p" :d="`M718 550L${p}`" stroke-width="2" stroke-dasharray="4 5" />
                <path v-for="c in channels" :key="c[0]" :d="`M${c[0]} ${c[1]}L${c[2]} ${c[3]}`" stroke-width="2" />
                <polyline :points="zigzag" stroke-width="1" />
              </g>
            </svg>
          </div>
        </div>

        <div v-for="p in panels" :key="p.id" class="row" :class="p.id">
          <div class="side">
            <svg class="axis" :viewBox="`0 ${p.top} 49 ${p.height}`" preserveAspectRatio="none">
              <text v-for="t in p.ticks" :key="t.t" x="45" :y="t.y" text-anchor="end">{{ t.t }}</text>
            </svg>
          </div>
          <div class="plot">
            <div class="legend sub"><span v-for="l in p.legend" :key="l.t" :class="l.c">{{ l.t }}</span></div>
            <svg :viewBox="`50 ${p.top} 1595 ${p.height}`" preserveAspectRatio="none" shape-rendering="crispEdges">
              <path v-for="y in p.grid" :key="y" :d="`M51 ${y + 0.5}H1645`" stroke="#c01010" stroke-dasharray="1 1" />
              <template v-if="p.id === 'vol'">
                <path :d="volRed" fill="#000" stroke="#ff3c3c" />
                <path :d="volCyan" fill="#0ff" />
              </template>
              <template v-if="p.id === 'macd'">
                <path :d="macdPath(true)" stroke="#ff3c3c" />
                <path :d="macdPath(false)" stroke="#0ff" />
              </template>
              <polyline v-for="(l, i) in p.lines" :key="i" :points="l.points" fill="none" :stroke="l.color" />
            </svg>
          </div>
        </div>

        <div class="row time">
          <div class="side day">日线</div>
          <div class="plot"><svg viewBox="50 1002 1595 15" preserveAspectRatio="none"><text v-for="m in months" :key="m.t" :x="m.x" y="1013">{{ m.t }}</text></svg></div>
        </div>
      </section>

      <aside class="quote">
        <div class="name">
          <h2>螺纹<span>2310(rb2310)</span></h2>
          <button type="button" class="winicon" aria-label="窗口"><svg width="16" height="14" viewBox="0 0 16 14"><rect x=".5" y=".5" width="15" height="13" /><rect x="3.500" y="3.500" width="9" height="7" /></svg></button>
        </div>
        <div class="ratio"><div :style="{ width: ratio + '%' }"></div></div>
        <table class="book">
          <tbody><tr v-for="(r, i) in asks" :key="r[0]" :class="{ big: i === 4 }"><th scope="row">{{ r[0] }}</th><td class="down">{{ r[1] }}</td><td class="qty">{{ r[2] }}</td></tr></tbody>
        </table>
        <table class="book">
          <tbody><tr v-for="(r, i) in bids" :key="r[0]" :class="{ big: i === 0 }"><th scope="row">{{ r[0] }}</th><td class="down">{{ r[1] }}</td><td class="qty">{{ r[2] }}</td></tr></tbody>
        </table>
        <table class="stats">
          <tbody><tr v-for="r in stats" :key="r[0]"><th scope="row">{{ r[0] }}</th><td :class="r[2]">{{ r[1] }}</td><th scope="row" class="second">{{ r[3] }}</th><td :class="r[5]">{{ r[4] }}</td></tr></tbody>
        </table>
        <table class="trades">
          <thead><tr><th scope="col" class="left">北京</th><th scope="col">价格</th><th scope="col">✓大单</th><th scope="col">仓差</th><th scope="col">性质</th></tr></thead>
          <tbody>
            <tr v-for="(r, i) in trades" :key="i">
              <td :class="r[0].length > 3 ? 'hour' : 'sec'"><span>{{ r[0] }}</span></td>
              <td class="down">{{ r[1] }}</td>
              <td :class="r[5] === 'u' ? 'up' : 'down'">{{ r[2] }}</td>
              <td class="yellow">{{ r[3] }}</td>
              <td class="kind" :class="r[5] === 'u' ? 'up' : 'down'">{{ r[4] }}</td>
            </tr>
          </tbody>
        </table>
        <div class="tabs"><button type="button" class="sel">笔</button><button type="button">权</button></div>
      </aside>
    </main>

    <footer class="status">
      <b class="f1">3204.75</b><b class="f2">-41.49</b><span class="f3">3426.77亿</span><i></i>
      <span class="f4">深</span><b class="f5">10920.33</b><b class="f2">-92.25</b><span class="f3">4600.18亿</span><i></i>
      <span class="f6">300</span><b class="f7">3859.09</b><b class="f8">-54.09</b><span class="f3">2117.68亿</span><i></i>
      <span class="tail"><strong>Pob<em>o</em></strong>
        <svg width="22" height="14" viewBox="0 0 22 14"><path d="M1 1h10L7 6v8H5V6zM13 10h2v4h-2zM16 7h2v7h-2zM19 3h2v11h-2z" fill="#444" /></svg>
        <span>15:33</span></span>
    </footer>
  </div>
</template>

<style>
body { background: #000; overflow: hidden; }
</style>

<style scoped>
.app { --line: #c01408; --cond: "DejaVu Sans Condensed", "DejaVu Sans", "Noto Sans CJK SC", sans-serif; --sans: "Liberation Sans", "Noto Sans CJK SC", sans-serif; display: flex; flex-direction: column; height: 100vh; overflow: hidden; background: #000; color: #e8e8e8; font: 12px/14px var(--sans); }
button { border: 0; background: none; padding: 0; margin: 0; font: inherit; color: inherit; }
a { text-decoration: none; color: inherit; }
.up { color: #ff3c3c; } .down { color: #00e400; } .white { color: #fff; } .yellow { color: #ff0; } .gray { color: #a8a8a8; }
.magenta { color: #f0f; } .green { color: #0f0; } .blue { color: #8080ff; } .orange { color: #ff8000; } .sky { color: #30a8e0; } .crimson { color: #d03058; } .red { color: #f00000; }

.titlebar { display: flex; align-items: center; flex: 0 0 24px; position: relative; background: linear-gradient(#e0e0e0, #f6f6f6 25%, #c4c4c4); }
.menus { display: flex; flex: 56 1 0; gap: 24px; margin-left: -21px; color: #000; white-space: nowrap; }
.menus .hot { color: #f00; }
h1 { margin: 0; font: 16px/20px var(--sans); color: #ff7040; white-space: nowrap; }
.actions { flex: 44 1 0; display: flex; justify-content: flex-end; align-items: flex-start; gap: 3px; height: 22px; }
.action { width: 74px; height: 20px; border: 1px solid #888; border-radius: 4px; background: linear-gradient(#fafafa, #bcbcbc); color: #d00000; font-size: 14px; font-weight: 500; display: flex; align-items: center; justify-content: center; gap: 6px; }
.winbtns { display: flex; gap: 16px; width: 68px; padding: 0 12px 0 16px; }
.stamp { position: absolute; right: 5px; top: 2px; font: 700 20px/24px "Open Sans", "Noto Sans CJK SC", sans-serif; color: #ff6a10; text-shadow: 0 0 1px #fff, 1px 1px 0 #fff; white-space: nowrap; }

.toolbar { display: flex; align-items: center; flex: 0 0 22px; background: #ebebeb; border-bottom: 1px solid #808080; }
.tool { flex: 0 0 28px; height: 22px; display: flex; align-items: center; justify-content: center; color: #2888e8; }
.tool:first-child { margin-left: -4px; }
.tool svg { width: 16px; height: 16px; }
.tool svg text { font-family: var(--sans); }
.fresh { font-size: 12px; position: relative; }
.fresh i { position: absolute; right: 4px; top: 3px; width: 6px; height: 6px; border-radius: 3px; background: #f02020; }
.bar { width: 1px; height: 18px; background: #909090; margin: 0 5px 0 2px; }
.chip { width: 16px; height: 16px; border-radius: 2px; color: #fff; font: 12px/16px var(--sans); text-align: center; }
.chip.small { font: 9px/16px "Open Sans", var(--sans); }
.gold { background: linear-gradient(#e0b440, #c08a00); }
.leaf { background: linear-gradient(#88c878, #549840); }
.fire { background: linear-gradient(#f87848, #e04010); }
.on { background: #fff; border: 1px solid #444; border-radius: 3px; box-sizing: border-box; }

.notice { flex: 0 0 47px; display: flex; justify-content: space-between; align-items: flex-start; border-bottom: 1px solid #808080; margin-bottom: 3px; box-shadow: 0 1px 0 #000, 0 3px 0 #d4d0c8; z-index: 1; }
.notice p { margin: 11px 0 0; padding: 5px 5px 4px 2px; border: solid #fff; border-width: 1px 1px 0 0; color: #fff; font: 12px/13px var(--sans); white-space: nowrap; height: 26px; }
.winicon { margin: 2px 3px 0 0; height: 14px; display: flex; }
.winicon svg, .icons svg { fill: none; stroke: #80c0ff; display: block; }

.work { flex: 1; min-height: 0; display: grid; grid-template-columns: minmax(0, 1fr) 241px; border-right: 2px solid #d4d0c8; }
.charts { display: grid; min-height: 0; grid-template-rows: 19px minmax(0, 1fr) 109px 68px 77px 71px 80px 15px; }
.charthead { display: flex; align-items: center; gap: 13px; border-bottom: 1px solid var(--line); padding-right: 1px; color: #80c0ff; }
.charthead a { text-decoration: underline; }
.charthead .cycle { margin: 0 8px 0 7px; }
.symbol { flex: 1; margin-left: -12px; color: #d8d8d8; white-space: nowrap; }
.icons { display: flex; gap: 1px; }
.row { display: grid; min-height: 0; grid-template-columns: 50px minmax(0, 1fr); border-bottom: 1px solid var(--line); }
.row.time { border-bottom: 0; }
.side { display: grid; min-height: 0; overflow: hidden; border-right: 1px solid var(--line); }
.cci .side { border: 2px solid var(--line); border-left: 0; margin-bottom: -1px; }
.side > *, .plot > * { grid-area: 1 / 1; }
.side .axis { width: 49px; height: 100%; min-height: 0; }
.axis text { font: 700 13px var(--sans); fill: #b0b0b0; }
.axis .plain { font: 12px var(--cond); }
.plot { display: grid; min-width: 0; min-height: 0; overflow: hidden; }
.plot svg { width: 100%; height: 100%; min-height: 0; display: block; }
.legend { z-index: 1; align-self: start; display: flex; height: 20px; padding-left: 1px; font: 12px/20px var(--cond); white-space: nowrap; }
.legend .k { width: 16px; }
.legend span { flex: none; }
.legend.sub { gap: 7px; }
.info { align-self: start; margin: 16px 0 0; border: solid #b8b8b8; border-width: 1px 1px 1px 0; font: 12px/14px var(--cond); overflow: hidden; }
.info .date { display: flex; justify-content: flex-end; color: #fff; height: 14px; }
.info dt { display: flex; justify-content: space-between; width: 37px; height: 14px; }
.info dd { margin: 0; display: flex; justify-content: flex-end; height: 14px; }
.labels text { font: 11px var(--cond); fill: #f0f0f0; }
.labels .mark { font-size: 12px; fill: #d0d0d0; }
.labels .dim { fill: #999; }
.labels .lit { fill: #fff; }
.xor > * { mix-blend-mode: difference; }
.day { text-align: right; padding-right: 6px; line-height: 15px; }
.time text { font: 11px var(--sans); fill: #e8e8e8; }

.quote { border-left: 1px solid var(--line); display: flex; flex-direction: column; min-height: 0; }
.name { display: flex; height: 24px; }
h2 { flex: 1; margin: 0; padding-left: 8px; text-align: center; font: 500 19px/23px "Noto Sans CJK SC", sans-serif; color: #ff0; white-space: nowrap; }
h2 span { font: 17px/23px "Liberation Mono", monospace; }
.ratio { height: 4px; border: solid var(--line); border-width: 1px 0; padding: 0 1px; background: linear-gradient(#00e000, #00e000) content-box; }
.ratio div { height: 4px; background: #ff3c3c; }
table { border-collapse: collapse; width: 100%; table-layout: fixed; }
.book, .stats { border-bottom: 1px solid var(--line); }
th, td { padding: 0; font: 700 14px/18px var(--sans); text-align: right; height: 20px; white-space: nowrap; }
th { font: 14px/18px var(--sans); text-align: left; padding-left: 5px; color: #e0e0e0; }
.book th { width: 50px; }
.book td { width: 58px; }
.book .qty { width: auto; text-align: left; padding-left: 14px; color: #ff0; }
.book .big td { height: 30px; font-size: 21px; }
.stats th { width: 40px; }
.stats .second { width: 32px; padding-left: 14px; }
.stats td { width: auto; }
.stats td:nth-child(2) { width: 68px; }
.stats td:last-child { padding-right: 6px; }
.trades th, .trades td { height: 22px; }
.trades th { color: #808080; text-align: right; padding-left: 0; width: 49px; }
.trades .left { width: 53px; text-align: left; padding-left: 5px; }
.trades th:last-child { width: 35px; }
.trades .hour { font-size: 14px; text-align: left; padding-left: 5px; }
.trades .sec { font-weight: 400; font-size: 12px; text-align: left; padding-left: 22px; }
.trades .kind { font-weight: 400; }
.tabs { margin-top: auto; height: 16px; display: flex; flex: none; }
.tabs button { width: 36px; border-top: 1px solid var(--line); border-right: 1px solid var(--line); font: 12px/14px var(--sans); color: #f0f0f0; }
.tabs .sel { border-top: 0; border-bottom: 1px solid var(--line); border-radius: 0 0 3px 3px; }
.tabs::after { content: ""; flex: 1; border-top: 1px solid var(--line); }

.status { flex: 0 0 15px; display: flex; align-items: flex-start; background: linear-gradient(#ccc, #aaa); color: #444; font: 12px/20px "Liberation Mono", "Noto Sans CJK SC", monospace; padding: 4px 3px 0 5px; box-sizing: border-box; height: 15px; overflow: hidden; white-space: nowrap; }
.status b { color: #008000; }
.status > i { width: 1px; height: 12px; background: #888; margin: 0 9px; }
.f1 { width: 70px; } .f2 { width: 50px; } .f3 { width: 61px; } .f4 { width: 21px; } .f5 { width: 77px; } .f6 { width: 28px; } .f7 { width: 70px; } .f8 { width: 49px; }
.status > b, .status > span { flex: none; }
.status .tail { margin-left: auto; display: flex; gap: 9px; font: 14px/20px var(--sans); }
.tail strong { font-size: 14px; }
.tail em { color: #e02020; font-style: normal; }
</style>
